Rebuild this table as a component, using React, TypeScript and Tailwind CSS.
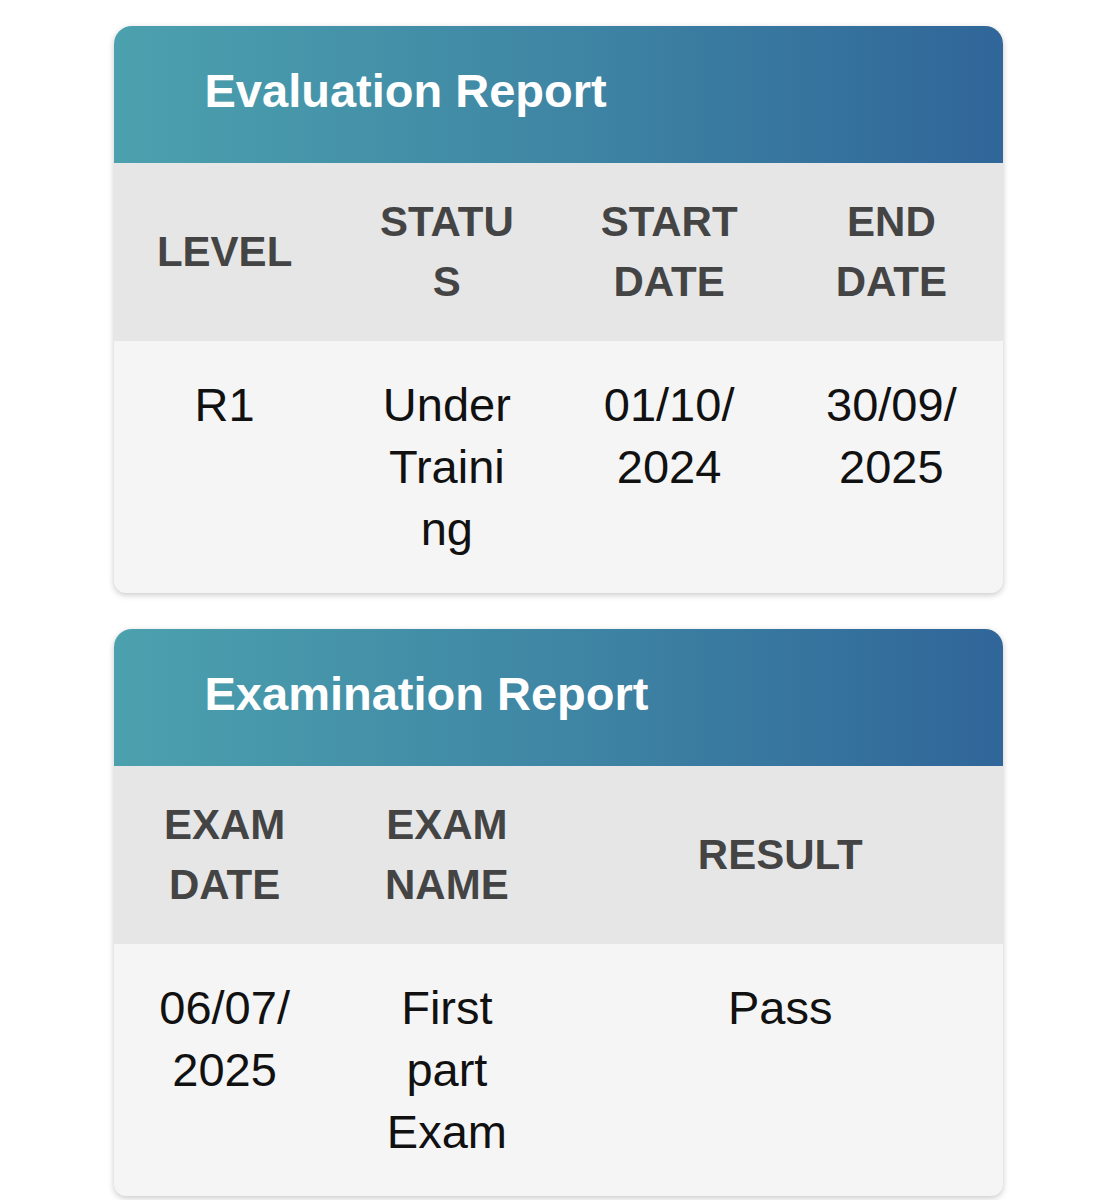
import React from "react";

const font = { fontFamily: '"Liberation Sans", Arial, Helvetica, sans-serif' };

function ReportCard({
  title,
  cols,
  gridClass,
  row,
}: {
  title: string;
  cols: string[];
  gridClass: string;
  row: string[];
}) {
  return (
    <div className="w-[889px] mx-auto rounded-t-[18px] rounded-b-[12px] overflow-hidden bg-[#f5f5f5] shadow-[0_2px_6px_rgba(0,0,0,0.22)]">
      <div className="h-[137px] pt-[41px] pl-[91px] bg-linear-to-r from-[#4ca1ae] via-[#3f86a4] to-[#306699]">
        <h2 className="text-[47px] leading-none font-bold text-white">{title}</h2>
      </div>
      <div className={`grid ${gridClass} bg-[#e6e6e6]`}>
        {cols.map((c) => (
          <div
            key={c}
            className="min-w-0 px-[42px] py-[29px] flex items-center justify-center text-center text-[42px] leading-[60px] font-bold text-[#444444] break-words"
          >
            <span className="block w-full min-w-0">{c}</span>
          </div>
        ))}
      </div>
      <div className={`grid ${gridClass}`}>
        {row.map((v, i) => (
          <div
            key={i}
            className="min-w-0 px-[42px] py-[33px] text-center text-[47px] leading-[62px] text-[#111111] break-words"
          >
            {v}
          </div>
        ))}
      </div>
    </div>
  );
}

export default function App() {
  return (
    <div className="min-h-[1200px] bg-white pt-[26px] flex flex-col gap-[36px]" style={font}>
      <ReportCard
        title="Evaluation Report"
        gridClass="grid-cols-4"
        cols={["LEVEL", "STATUS", "START DATE", "END DATE"]}
        row={["R1", "Under Training", "01/10/2024", "30/09/2025"]}
      />
      <ReportCard
        title="Examination Report"
        gridClass="grid-cols-[minmax(0,1fr)_minmax(0,1fr)_minmax(0,2fr)]"
        cols={["EXAM DATE", "EXAM NAME", "RESULT"]}
        row={["06/07/2025", "First part Exam", "Pass"]}
      />
    </div>
  );
}
